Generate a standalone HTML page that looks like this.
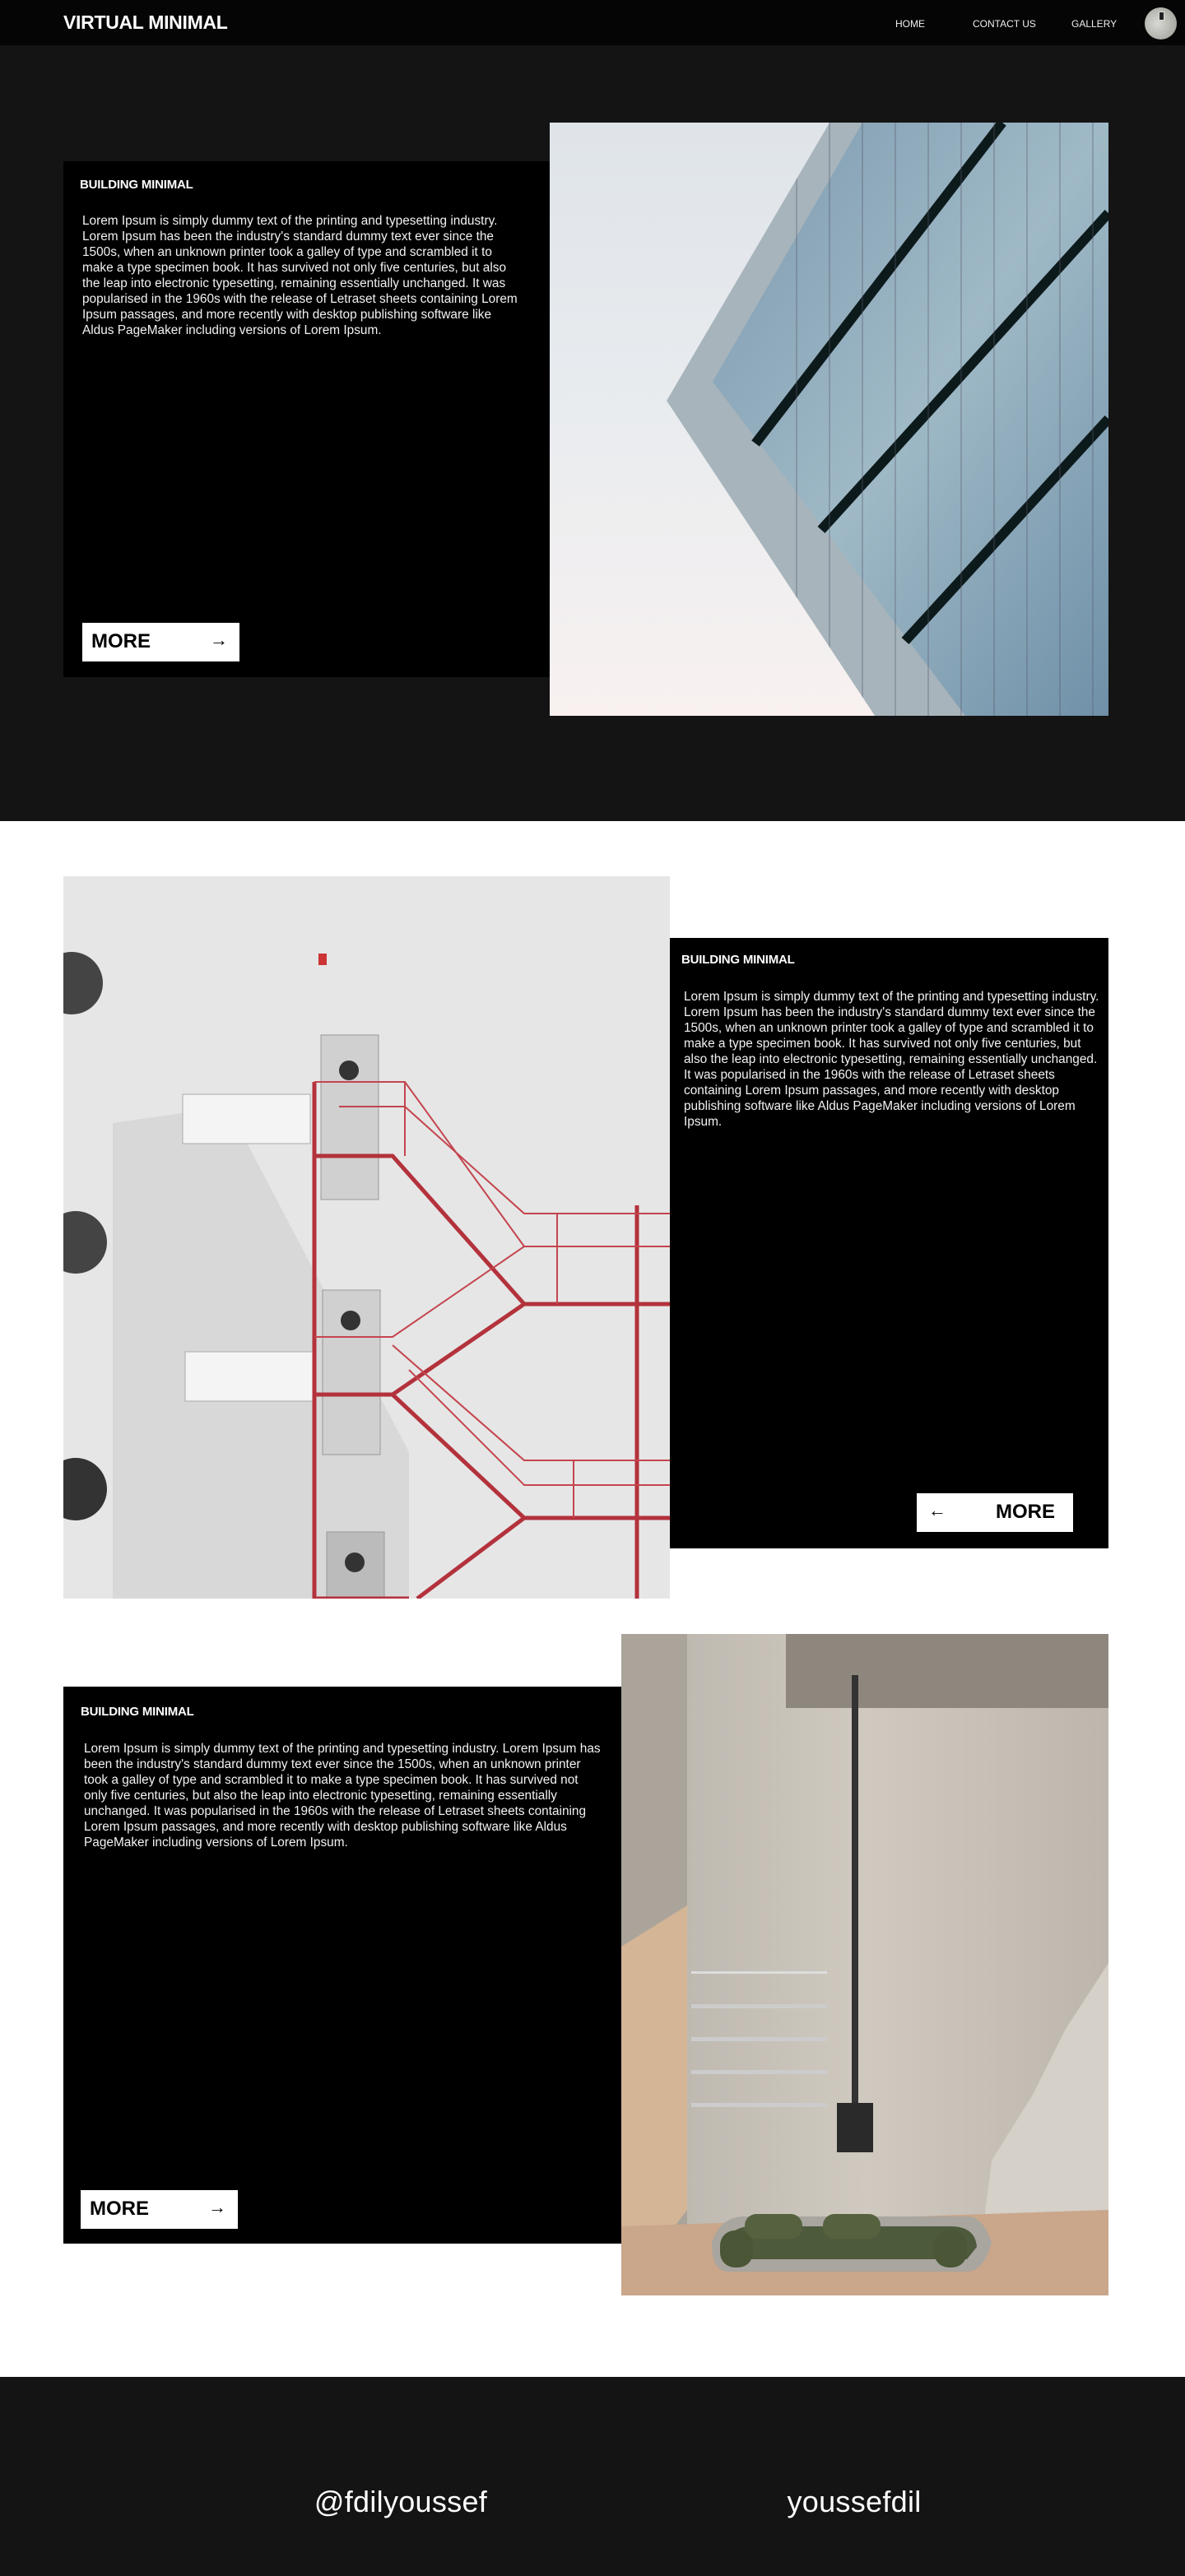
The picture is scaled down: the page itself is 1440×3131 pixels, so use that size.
<!DOCTYPE html>
<html><head><meta charset="utf-8">
<style>
*{margin:0;padding:0;box-sizing:border-box}
body{width:1440px;height:3131px;background:#fff;font-family:"Liberation Sans",sans-serif;position:relative;overflow:hidden;color:#fff}
.abs{position:absolute}
.nav{left:0;top:0;width:1440px;height:55px;background:#050505}
.logo{left:77px;top:14px;font-size:23px;font-weight:bold;letter-spacing:-0.3px}
.nl{top:22px;font-size:12px;color:#eee}
.hero{left:0;top:55px;width:1440px;height:943px;background:#141414}
.box{background:#000}
.t{font-size:15px;font-weight:bold;letter-spacing:-0.2px}
.p{font-size:15.4px;line-height:19px;color:#f2f2f2}
.btn{background:#fff;color:#000;font-weight:bold;font-size:24px}
.foot{left:0;top:2889px;width:1440px;height:242px;background:#141414}
</style></head><body>
<div class="abs nav"></div>
<div class="abs logo">VIRTUAL MINIMAL</div>
<div class="abs nl" style="left:1088px">HOME</div>
<div class="abs nl" style="left:1182px">CONTACT US</div>
<div class="abs nl" style="left:1302px">GALLERY</div>
<div class="abs" style="left:1391px;top:9px;width:39px;height:39px;border-radius:50%;background:radial-gradient(circle at 40% 50%,#d8d8d4,#9a9a94);overflow:hidden"><div style="position:absolute;left:17px;top:5px;width:7px;height:11px;background:#222;border:1px solid #ddd"></div></div>

<div class="abs hero"></div>
<div class="abs box" style="left:77px;top:196px;width:591px;height:627px"></div>
<div class="abs t" style="left:97px;top:216px">BUILDING MINIMAL</div>
<div class="abs p" style="left:100px;top:259px;width:535px">Lorem Ipsum is simply dummy text of the printing and typesetting industry. Lorem Ipsum has been the industry's standard dummy text ever since the 1500s, when an unknown printer took a galley of type and scrambled it to make a type specimen book. It has survived not only five centuries, but also the leap into electronic typesetting, remaining essentially unchanged. It was popularised in the 1960s with the release of Letraset sheets containing Lorem Ipsum passages, and more recently with desktop publishing software like Aldus PageMaker including versions of Lorem Ipsum.</div>
<div class="abs btn" style="left:100px;top:757px;width:191px;height:47px"><span style="position:absolute;left:11px;top:9px">MORE</span><span style="position:absolute;right:14px;top:8px;font-weight:normal;font-size:22px">→</span></div>
<svg class="abs" style="left:668px;top:149px" width="679" height="721" viewBox="0 0 679 721">
<defs><linearGradient id="sky" x1="0" y1="0" x2="0" y2="1"><stop offset="0" stop-color="#dfe4e9"/><stop offset=".5" stop-color="#e9ecef"/><stop offset="1" stop-color="#f8f1f0"/></linearGradient>
<linearGradient id="gl" x1="0" y1="0" x2="1" y2="1"><stop offset="0" stop-color="#7d9ab0"/><stop offset=".5" stop-color="#9fb9c6"/><stop offset="1" stop-color="#6f90a8"/></linearGradient></defs>
<rect width="679" height="721" fill="url(#sky)"/>
<polygon points="340,0 679,0 679,721 395,721 142,338" fill="#a7b4bc"/>
<polygon points="380,0 679,0 679,721 505,721 198,315" fill="url(#gl)"/>
<g stroke="#0d1a1c" stroke-width="12"><line x1="250" y1="390" x2="550" y2="0"/><line x1="330" y1="495" x2="679" y2="110"/><line x1="432" y1="630" x2="679" y2="360"/></g>
<g stroke="#556" stroke-width="1" opacity=".6"><line x1="300" y1="0" x2="300" y2="721"/><line x1="340" y1="0" x2="340" y2="721"/><line x1="380" y1="0" x2="380" y2="721"/><line x1="420" y1="0" x2="420" y2="721"/><line x1="460" y1="0" x2="460" y2="721"/><line x1="500" y1="0" x2="500" y2="721"/><line x1="540" y1="0" x2="540" y2="721"/><line x1="580" y1="0" x2="580" y2="721"/><line x1="620" y1="0" x2="620" y2="721"/><line x1="660" y1="0" x2="660" y2="721"/></g>
<polygon points="0,0 340,0 142,338 395,721 0,721" fill="url(#sky)"/>
</svg>

<svg class="abs" style="left:77px;top:1065px" width="737" height="878" viewBox="0 0 737 878">
<rect width="737" height="878" fill="#e6e6e6"/>
<polygon points="60,300 200,280 420,700 420,878 60,878" fill="#cfcfcf" opacity=".6"/>
<rect x="145" y="265" width="155" height="60" fill="#f4f4f4" stroke="#aaa"/>
<rect x="148" y="578" width="155" height="60" fill="#f4f4f4" stroke="#aaa"/>
<rect x="313" y="193" width="70" height="200" fill="#d0d0d0" stroke="#999"/>
<rect x="315" y="503" width="70" height="200" fill="#d0d0d0" stroke="#999"/>
<rect x="320" y="797" width="70" height="81" fill="#bbb" stroke="#999"/>
<circle cx="347" cy="236" r="12" fill="#333"/><circle cx="349" cy="540" r="12" fill="#333"/><circle cx="354" cy="834" r="12" fill="#333"/>
<circle cx="10" cy="130" r="38" fill="#444"/><circle cx="15" cy="445" r="38" fill="#444"/><circle cx="15" cy="745" r="38" fill="#333"/>
<rect x="310" y="94" width="10" height="14" fill="#c33"/>
<g stroke="#b3323c" stroke-width="5" fill="none">
<line x1="305" y1="250" x2="305" y2="878"/><line x1="697" y1="400" x2="697" y2="878"/>
<polyline points="305,340 400,340 560,520 737,520"/><polyline points="305,630 400,630 560,520"/><polyline points="400,630 560,780 737,780"/><polyline points="305,878 420,878"/><polyline points="560,780 430,878"/>
</g>
<g stroke="#c4454e" stroke-width="2" fill="none">
<polyline points="305,250 415,250 560,450 737,450"/><polyline points="335,280 415,280 560,410 737,410"/><line x1="415" y1="250" x2="415" y2="340"/><line x1="600" y1="410" x2="600" y2="520"/>
<polyline points="305,560 400,560 560,450"/><polyline points="400,570 560,710 737,710"/><polyline points="420,600 560,740 737,740"/><line x1="620" y1="710" x2="620" y2="780"/>
</g></svg>
<div class="abs box" style="left:814px;top:1140px;width:533px;height:742px"></div>
<div class="abs t" style="left:828px;top:1158px">BUILDING MINIMAL</div>
<div class="abs p" style="left:831px;top:1202px;width:505px">Lorem Ipsum is simply dummy text of the printing and typesetting industry. Lorem Ipsum has been the industry's standard dummy text ever since the 1500s, when an unknown printer took a galley of type and scrambled it to make a type specimen book. It has survived not only five centuries, but also the leap into electronic typesetting, remaining essentially unchanged. It was popularised in the 1960s with the release of Letraset sheets containing Lorem Ipsum passages, and more recently with desktop publishing software like Aldus PageMaker including versions of Lorem Ipsum.</div>
<div class="abs btn" style="left:1114px;top:1815px;width:190px;height:47px"><span style="position:absolute;left:14px;top:8px;font-weight:normal;font-size:22px">←</span><span style="position:absolute;right:22px;top:9px">MORE</span></div>

<svg class="abs" style="left:755px;top:1986px" width="592" height="804" viewBox="0 0 592 804">
<defs><linearGradient id="wall" x1="0" y1="0" x2="1" y2="0"><stop offset="0" stop-color="#b9b4ab"/><stop offset=".5" stop-color="#cfc9c0"/><stop offset="1" stop-color="#bdb6ad"/></linearGradient></defs>
<rect width="592" height="804" fill="url(#wall)"/>
<rect x="0" y="0" width="80" height="804" fill="#aaa49b"/>
<polygon points="0,380 80,330 80,700 0,804" fill="#d4b596"/>
<rect x="200" y="0" width="392" height="90" fill="#8e877d"/>
<rect x="85" y="410" width="165" height="3" fill="#ddd"/><rect x="85" y="450" width="165" height="5" fill="#ccc"/><rect x="85" y="490" width="165" height="5" fill="#ccc"/><rect x="85" y="530" width="165" height="5" fill="#ccc"/><rect x="85" y="570" width="165" height="5" fill="#ccc"/>
<rect x="280" y="50" width="8" height="520" fill="#333"/>
<rect x="262" y="570" width="44" height="60" fill="#2a2a2a"/>
<polygon points="592,400 592,720 440,720 450,640 500,560 540,480" fill="#d5d0c8"/>
<polygon points="0,720 592,700 592,804 0,804" fill="#caa68a"/>
<path d="M110,740 Q120,708 150,708 L420,708 Q440,708 450,740 Q440,775 420,775 L130,775 Q110,775 110,740Z" fill="#a9a59f"/>
<path d="M125,745 Q130,720 160,720 L400,720 Q430,720 432,745 L420,760 L140,760Z" fill="#4e5a3c"/>
<rect x="150" y="705" width="70" height="30" rx="14" fill="#56623f"/><rect x="245" y="705" width="70" height="30" rx="14" fill="#56623f"/>
<rect x="120" y="725" width="40" height="45" rx="18" fill="#4a5636"/><rect x="380" y="725" width="40" height="45" rx="18" fill="#4a5636"/>
</svg>
<div class="abs box" style="left:77px;top:2050px;width:678px;height:677px"></div>
<div class="abs t" style="left:98px;top:2072px">BUILDING MINIMAL</div>
<div class="abs p" style="left:102px;top:2116px;width:630px">Lorem Ipsum is simply dummy text of the printing and typesetting industry. Lorem Ipsum has been the industry's standard dummy text ever since the 1500s, when an unknown printer took a galley of type and scrambled it to make a type specimen book. It has survived not only five centuries, but also the leap into electronic typesetting, remaining essentially unchanged. It was popularised in the 1960s with the release of Letraset sheets containing Lorem Ipsum passages, and more recently with desktop publishing software like Aldus PageMaker including versions of Lorem Ipsum.</div>
<div class="abs btn" style="left:98px;top:2662px;width:191px;height:47px"><span style="position:absolute;left:11px;top:9px">MORE</span><span style="position:absolute;right:14px;top:8px;font-weight:normal;font-size:22px">→</span></div>

<div class="abs foot"></div>
<div class="abs" style="left:287px;top:3020px;width:400px;text-align:center;font-size:36px;letter-spacing:0.3px">@fdilyoussef</div>
<div class="abs" style="left:838px;top:3020px;width:400px;text-align:center;font-size:36px;letter-spacing:0.3px">youssefdil</div>
</body></html>
